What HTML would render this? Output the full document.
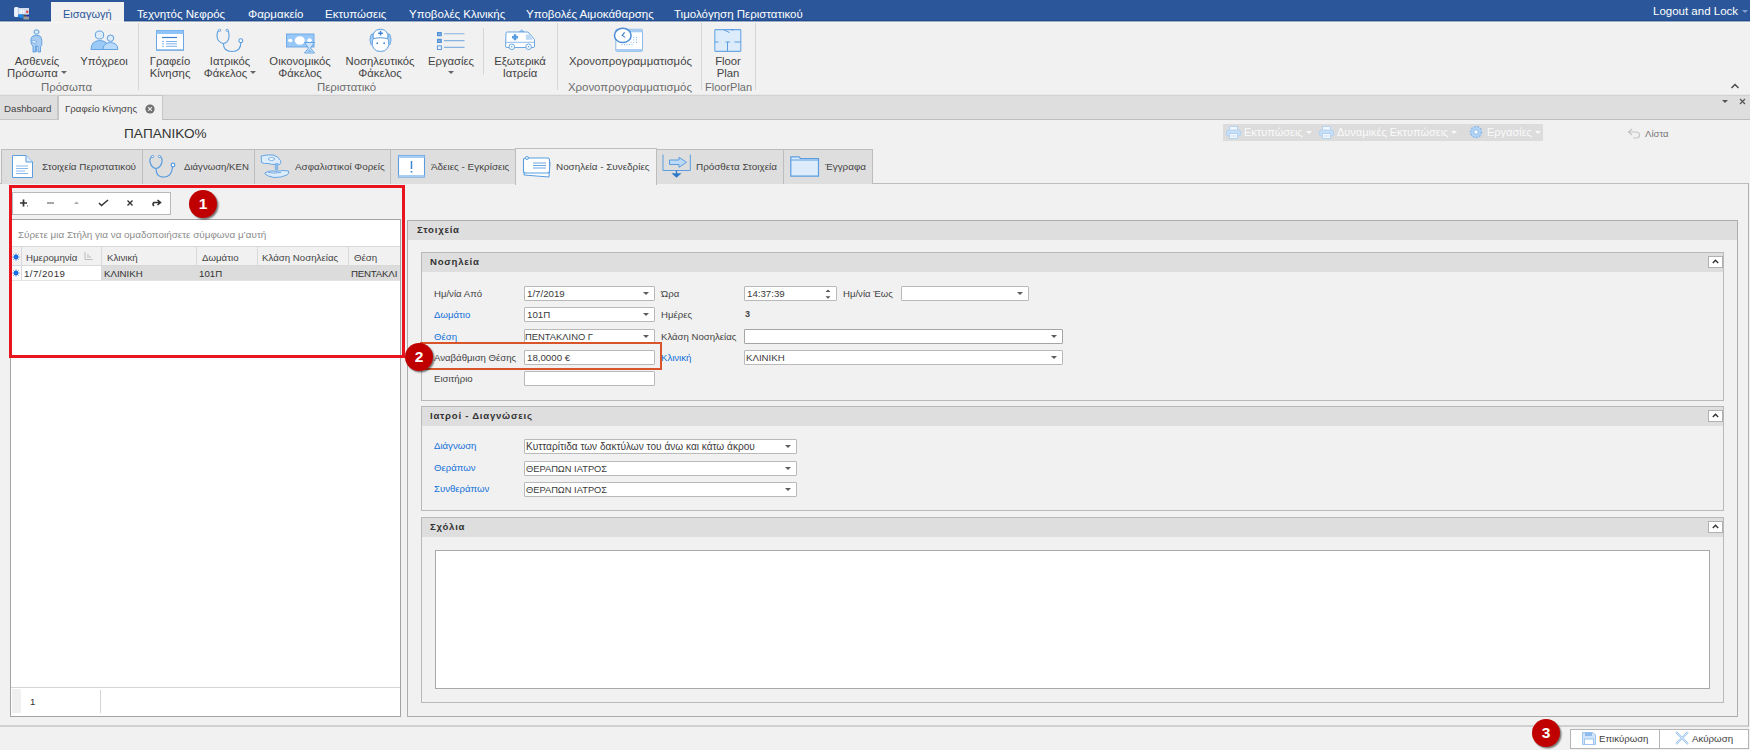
<!DOCTYPE html>
<html><head><meta charset="utf-8">
<style>
*{box-sizing:border-box;margin:0;padding:0}
html,body{width:1750px;height:750px;overflow:hidden;background:#f1f1f1;font-family:"Liberation Sans",sans-serif;font-size:11px;color:#444}
.a{position:absolute}
.t{position:absolute;white-space:nowrap;line-height:13px}
svg{position:absolute;overflow:visible}
#top{left:0;top:0;width:1750px;height:21px;background:#2b579a}
.menu{color:#fff;font-size:11.5px}
.rsep{position:absolute;width:1px;background:#d6d6d6}
.rb{position:absolute;width:120px;text-align:center;color:#444;line-height:11.5px;white-space:nowrap;font-size:11.3px}
.glab{position:absolute;color:#6d6d6d;top:81px;white-space:nowrap;line-height:13px;font-size:11.4px}
.ptab{position:absolute;top:149px;height:35px;background:#dedede;border:1px solid #bdbdbd;border-bottom:none}
.pt{position:absolute;top:161px;font-size:9.9px;color:#444;white-space:nowrap;line-height:12px}
.fld{position:absolute;background:#fff;border:1px solid #b9b9b9;height:15px;border-radius:1px}
.fv{position:absolute;left:2px;top:1px;line-height:12px;color:#3a3a3a;white-space:nowrap;font-size:9.7px}
.dd{position:absolute;right:5.5px;top:5px;width:0;height:0;border-left:3px solid transparent;border-right:3px solid transparent;border-top:3px solid #5c5c5c}
.lbl{position:absolute;white-space:nowrap;line-height:12px;color:#444;font-size:9.6px}
.blue{color:#1170d8}
.gbox{position:absolute;border:1px solid #b9b9b9;background:#f1f1f1}
.gh{position:absolute;left:0;top:0;right:0;height:18.5px;background:#dedede}
.ght{position:absolute;top:3px;font-weight:bold;color:#333;font-size:9.6px;line-height:12px;white-space:nowrap;letter-spacing:0.75px}
.cbtn{position:absolute;width:14.5px;height:12px;background:#fff;border:1px solid #b0b0b0}
.tri{display:inline-block;width:0;height:0;border-left:3px solid transparent;border-right:3px solid transparent;border-top:3px solid #666;vertical-align:middle;margin-bottom:2px}
.tri.w{border-top-color:#fafafa;margin-left:0px}
.badge{position:absolute;width:28px;height:28px;border-radius:50%;background:#c00000;color:#fff;font-weight:bold;font-size:15.5px;text-align:center;line-height:28px;box-shadow:1.5px 1.5px 1.5px rgba(0,0,0,.5)}
</style></head>
<body>
<!-- ================= TOP BAR ================= -->
<div id="top" class="a"></div>
<div class="a" style="left:0;top:20px;width:1750px;height:1px;background:#214c90"></div>
<div class="a" style="left:0;top:21px;width:1750px;height:1px;background:#9aabc8"></div>
<div class="a" style="left:0;top:22px;width:1750px;height:1px;background:#f7f6f3"></div>
<svg style="left:13px;top:6px" width="17" height="14" viewBox="0 0 17 14">
 <rect x="1" y="1" width="4.8" height="10" rx="1.5" fill="#dfe6f5"/><rect x="2" y="1.5" width="2.5" height="9" fill="#eef2fa"/>
 <rect x="5.8" y="2" width="10.2" height="6.5" fill="#d2def0"/>
 <path d="M7 3 V8 M8.5 3 V8 M10.5 3.5 V8 M7 5.5 H12" stroke="#f4f6fb" stroke-width="0.9"/>
 <circle cx="14.2" cy="5.8" r="1.4" fill="#e5554f"/>
 <path d="M5 8.5 H10.5 V12.5 L7 11.5 L5 11Z" fill="#1a86e8"/>
 <rect x="10.5" y="9" width="5.5" height="4.5" fill="#9a9a9a"/><rect x="10.5" y="9" width="3" height="1.5" fill="#5a4a3a"/><rect x="13.5" y="9" width="2.5" height="1.5" fill="#1b2fb0"/>
</svg>
<div class="a" style="left:51px;top:2px;width:73px;height:20px;background:#f1f1f1"></div>
<div class="t" style="left:63px;top:8px;color:#2b579a;font-size:11px">Εισαγωγή</div>
<div class="t menu" style="left:137px;top:8px">Τεχνητός Νεφρός</div>
<div class="t menu" style="left:248px;top:8px">Φαρμακείο</div>
<div class="t menu" style="left:325px;top:8px">Εκτυπώσεις</div>
<div class="t menu" style="left:409px;top:8px">Υποβολές Κλινικής</div>
<div class="t menu" style="left:526px;top:8px">Υποβολές Αιμοκάθαρσης</div>
<div class="t menu" style="left:674px;top:8px">Τιμολόγηση Περιστατικού</div>
<div class="t menu" style="left:1653px;top:5px">Logout and Lock</div>
<div class="a" style="left:1742px;top:10px;width:0;height:0;border-left:3px solid transparent;border-right:3px solid transparent;border-top:3px solid #7f9fd0"></div>

<!-- ================= RIBBON ================= -->
<div class="rsep" style="left:138px;top:23px;height:67px"></div>
<div class="rsep" style="left:483px;top:28px;height:47px"></div>
<div class="rsep" style="left:557px;top:23px;height:67px"></div>
<div class="rsep" style="left:701px;top:23px;height:67px"></div>
<div class="rsep" style="left:755px;top:23px;height:67px"></div>

<div class="rb" style="left:-23px;top:56px">Ασθενείς<br>Πρόσωπα <i class="tri"></i></div>
<div class="rb" style="left:44px;top:56px">Υπόχρεοι</div>
<div class="rb" style="left:110px;top:56px">Γραφείο<br>Κίνησης</div>
<div class="rb" style="left:170px;top:56px">Ιατρικός<br>Φάκελος <i class="tri"></i></div>
<div class="rb" style="left:240px;top:56px">Οικονομικός<br>Φάκελος</div>
<div class="rb" style="left:320px;top:56px">Νοσηλευτικός<br>Φάκελος</div>
<div class="rb" style="left:391px;top:56px">Εργασίες<br><i class="tri"></i></div>
<div class="rb" style="left:460px;top:56px">Εξωτερικά<br>Ιατρεία</div>
<div class="rb" style="left:569px;top:56px">Χρονοπρογραμματισμός</div>
<div class="rb" style="left:668px;top:56px">Floor<br>Plan</div>

<div class="glab" style="left:41px">Πρόσωπα</div>
<div class="glab" style="left:317px">Περιστατικό</div>
<div class="glab" style="left:568px">Χρονοπρογραμματισμός</div>
<div class="glab" style="left:705px;font-size:11px">FloorPlan</div>
<svg style="left:1730px;top:83px" width="10" height="6" viewBox="0 0 10 6"><path d="M1.5 5 L5 1.5 L8.5 5" fill="none" stroke="#444" stroke-width="1.4"/></svg>

<!-- ribbon icons -->
<!-- patient -->
<svg style="left:29px;top:29px" width="16" height="24" viewBox="0 0 16 24">
 <ellipse cx="7.5" cy="3" rx="2.5" ry="2.2" fill="#dcecfb" stroke="#5a9de0" stroke-width="1"/>
 <path d="M4 7 Q7.5 5.5 11 7 Q12.8 8.5 12.8 11.5 V15.5 Q12.8 17 11.5 17.5 V23 H9 V17 H6.5 V23 H4 V17 Q2 16 2 13 V10 Q2 8 4 7Z" fill="#a9cdf2" stroke="#5a9de0" stroke-width="0.9"/>
 <path d="M7.5 17 V23" stroke="#5a9de0" stroke-width="0.8"/>
 <path d="M2.5 12 Q5 11 8 12.8 Q7 14.5 4.5 14 Q2.5 13.5 2.5 12Z" fill="#fff" stroke="#5a9de0" stroke-width="0.7"/>
</svg>
<!-- people -->
<svg style="left:90px;top:30px" width="28" height="21" viewBox="0 0 28 21">
 <ellipse cx="9.5" cy="5" rx="4.2" ry="4" fill="#dcecfb" stroke="#5a9de0" stroke-width="1"/>
 <path d="M1 19.5 Q1 11 9.5 10.5 Q15 10.5 17 13.5 L17 19.5Z" fill="#9ccaf6" stroke="#5a9de0" stroke-width="0.9"/>
 <ellipse cx="20.5" cy="8.2" rx="3.3" ry="3.2" fill="#dcecfb" stroke="#5a9de0" stroke-width="1"/>
 <path d="M13 19.5 Q13 12.8 20.5 12.5 Q27.8 12.8 27.8 19.5Z" fill="#b9dafa" stroke="#5a9de0" stroke-width="0.9"/>
</svg>
<!-- form -->
<svg style="left:156px;top:30px" width="28" height="21" viewBox="0 0 28 21">
 <rect x="0.5" y="0.5" width="27" height="20" fill="#fff" stroke="#6aa6e4" stroke-width="1"/>
 <rect x="0.5" y="0.5" width="27" height="3.5" fill="#90c4f8"/>
 <rect x="0.5" y="19" width="27" height="1.5" fill="#9cc3ea"/>
 <path d="M6 7.5 H21" stroke="#3f7fd0" stroke-width="1.2"/>
 <path d="M6 11.5 H8 M10 11.5 H21 M6 13.8 H8 M10 13.8 H21 M6 16.3 H8 M10 16.3 H21" stroke="#7fb2ea" stroke-width="1"/>
</svg>
<!-- stethoscope -->
<svg style="left:214px;top:28px" width="30" height="25" viewBox="0 0 30 25">
 <path d="M5.3 2.5 Q3 3 3 8 Q3.5 14.5 9.4 15.5 Q15 14.5 15 8 Q15 3 13.3 2.5" fill="none" stroke="#5a9de0" stroke-width="1.1"/>
 <path d="M9.4 15.5 Q9.4 23.5 18 23.5 Q26.8 23.5 26.8 14.7" fill="none" stroke="#5a9de0" stroke-width="1.1"/>
 <circle cx="26.8" cy="12.7" r="1.9" fill="#fff" stroke="#5a9de0" stroke-width="1.1"/>
 <ellipse cx="5.6" cy="2.3" rx="1.3" ry="1" fill="#fff" stroke="#5a9de0" stroke-width="0.9"/>
 <ellipse cx="13.2" cy="2.3" rx="1.3" ry="1" fill="#fff" stroke="#5a9de0" stroke-width="0.9"/>
</svg>
<!-- money -->
<svg style="left:286px;top:33px" width="29" height="21" viewBox="0 0 29 21">
 <rect x="0.5" y="1" width="27.5" height="13" fill="#98c8f8" stroke="#6aa6e4" stroke-width="0.9"/>
 <ellipse cx="4.2" cy="7.5" rx="2.2" ry="1.7" fill="#fff"/>
 <ellipse cx="13.8" cy="7.5" rx="5" ry="4.2" fill="#fff"/>
 <ellipse cx="23.5" cy="7.3" rx="2.3" ry="2" fill="#fff"/>
 <path d="M18.5 9.5 H28.5 L24.5 15 L28.5 20 H18.5 L22.5 15Z" fill="#cfe4fa" stroke="#5a9de0" stroke-width="0.9"/>
 <path d="M20.5 19 H26.5 L23.5 16Z" fill="#8fbff0"/>
</svg>
<!-- nurse -->
<svg style="left:369px;top:28px" width="23" height="25" viewBox="0 0 23 25">
 <path d="M2.8 11 Q2 23.5 11.5 23.5 Q21 23.5 20.2 11" fill="#fff" stroke="#5a9de0" stroke-width="1"/>
 <path d="M2.2 17 Q0 12 1.5 8 Q2.5 5 4 6 L4.5 10.5 Q3 12.5 3.3 16Z" fill="#a9cdf2" stroke="#5a9de0" stroke-width="0.8"/>
 <path d="M20.8 17 Q23 12 21.5 8 Q20.5 5 19 6 L18.5 10.5 Q20 12.5 19.7 16Z" fill="#a9cdf2" stroke="#5a9de0" stroke-width="0.8"/>
 <path d="M4.2 10.5 Q3 1.8 11.5 1.2 Q20 1.8 18.8 10.5 Q11.5 8.8 4.2 10.5Z" fill="#fff" stroke="#5a9de0" stroke-width="1"/>
 <path d="M11.5 2.8 V7.6 M9.1 5.2 H13.9" stroke="#3f86d6" stroke-width="1.5"/>
 <circle cx="8.3" cy="15.2" r="0.9" fill="#3f86d6"/><circle cx="15.2" cy="15.2" r="0.9" fill="#3f86d6"/>
</svg>
<!-- tasks -->
<svg style="left:436px;top:31px" width="30" height="20" viewBox="0 0 30 20">
 <rect x="1" y="1" width="4.8" height="4.2" fill="#4a8fd8"/><path d="M2 2 L4.8 4.2 M4.8 2 L2 4.2" stroke="#a9cdf2" stroke-width="0.6"/>
 <rect x="1" y="7.8" width="4.8" height="4.2" fill="#4a8fd8"/><path d="M2 8.8 L4.8 11 M4.8 8.8 L2 11" stroke="#a9cdf2" stroke-width="0.6"/>
 <rect x="1.4" y="14.9" width="4" height="3.6" fill="#eef5fd" stroke="#4a8fd8" stroke-width="0.9"/>
 <path d="M8 2.8 H28.5 M8 9.6 H28.5 M8 16.4 H28.5" stroke="#86b2e0" stroke-width="1.1"/>
</svg>
<!-- ambulance -->
<svg style="left:505px;top:29px" width="31" height="22" viewBox="0 0 31 22">
 <path d="M14.5 3 L16.7 0.8 L19 3Z" fill="#cfe4fa" stroke="#5a9de0" stroke-width="0.8"/>
 <path d="M1 4 Q1 3 2.5 3 H22 Q23 3 24 4 L29.5 10.5 V17 Q29.5 18.5 28 18.5 H2 Q0.6 18.5 0.6 17Z" fill="#fff" stroke="#5a9de0" stroke-width="0.9"/>
 <path d="M20.8 5.6 H24.5 L28 10.8 H20.8Z" fill="#bcd9f6"/>
 <path d="M0.7 13.3 H29.5" stroke="#7fb2ea" stroke-width="0.9"/>
 <path d="M10 5.3 V11.3 M7 8.3 H13" stroke="#5a9de0" stroke-width="2.6"/>
 <circle cx="6.8" cy="17.8" r="2.8" fill="#fff" stroke="#5a9de0" stroke-width="0.9"/><circle cx="6.8" cy="17.8" r="0.8" fill="#5a9de0"/>
 <circle cx="23.6" cy="17.8" r="2.8" fill="#fff" stroke="#5a9de0" stroke-width="0.9"/><circle cx="23.6" cy="17.8" r="0.8" fill="#5a9de0"/>
</svg>
<!-- schedule -->
<svg style="left:613px;top:27px" width="31" height="26" viewBox="0 0 31 26">
 <rect x="2.8" y="2.3" width="26.7" height="22" rx="1" fill="#fff" stroke="#7fb2ea" stroke-width="0.9"/>
 <rect x="2.8" y="2.3" width="26.7" height="3" fill="#a9cdf2"/><rect x="2.8" y="22" width="26.7" height="2.3" fill="#a9cdf2"/>
 <path d="M20.2 10.4 h1 M23 10.4 h1 M20.2 12.9 h1 M23 12.9 h1 M17.5 15.4 h1 M20.2 15.4 h1 M23 15.4 h1 M8.2 17.7 h1 M11 17.7 h1 M13.5 17.7 h1 M16 17.7 h1 M18.5 17.7 h1" stroke="#7fb2ea" stroke-width="1"/>
 <ellipse cx="9.8" cy="8.4" rx="8.3" ry="7.2" fill="#fff" stroke="#4a8fd8" stroke-width="1.5"/>
 <path d="M11.6 5.3 L9.2 8.4 L12.2 10.4" fill="none" stroke="#3f7cc8" stroke-width="1.1"/>
</svg>
<!-- floor plan -->
<svg style="left:714px;top:29px" width="28" height="23" viewBox="0 0 28 23">
 <rect x="0.8" y="0.6" width="26" height="21.8" rx="0.8" fill="#dcecfb" stroke="#6aa6e4" stroke-width="1.1"/>
 <path d="M9.5 0.6 L15.5 3.6 M17 0.8 H20 M0.8 13 H4.5 M11.5 13 H16 M20.5 13 H26.8 M13.5 13 V22.4" fill="none" stroke="#5a9de0" stroke-width="1"/>
</svg>

<!-- ================= DOC TABS ================= -->
<div class="a" style="left:0;top:94px;width:1750px;height:1px;background:#e9e9e9"></div>
<div class="a" style="left:0;top:95px;width:1750px;height:25px;background:#dedede;border-top:1px solid #d2d2d2;border-bottom:1px solid #bdbdbd"></div>
<div class="a" style="left:0;top:96px;width:58px;height:24px;background:#dedede;border-right:1px solid #c6c6c6;border-bottom:1px solid #c6c6c6"></div>
<div class="t" style="left:4px;top:102px;font-size:9.7px;color:#444">Dashboard</div>
<div class="a" style="left:58px;top:95px;width:105px;height:25px;background:#f1f1f1;border:1px solid #c6c6c6;border-bottom:none"></div>
<div class="t" style="left:65px;top:101.5px;font-size:9.7px;color:#444">Γραφείο Κίνησης</div>
<svg style="left:145px;top:103.5px" width="10" height="10" viewBox="0 0 10 10"><circle cx="5" cy="5" r="4.6" fill="#707070"/><path d="M3.1 3.1 L6.9 6.9 M6.9 3.1 L3.1 6.9" stroke="#e6e6e6" stroke-width="1.3"/></svg>
<div class="a" style="left:1721.5px;top:100px;width:0;height:0;border-left:3px solid transparent;border-right:3px solid transparent;border-top:3.5px solid #555"></div>
<svg style="left:1739px;top:98px" width="7" height="7" viewBox="0 0 7 7"><path d="M1 1 L6 6 M6 1 L1 6" stroke="#555" stroke-width="1.2"/></svg>

<!-- ================= CONTENT HEADER ================= -->
<div class="t" style="left:124px;top:126px;font-size:13.6px;color:#333;line-height:15px">ΠΑΠΑΝΙΚΟ%</div>

<div class="a" style="left:1223px;top:124px;width:320px;height:17px;background:#dcdcdc"></div>
<svg style="left:1226px;top:126px" width="15" height="13" viewBox="0 0 15 13">
 <rect x="3.5" y="0.5" width="8" height="4" fill="#f4f8fd" stroke="#b5d3f2"/><rect x="0.5" y="4" width="14" height="6" rx="2" fill="#c6def6" stroke="#b5d3f2"/><rect x="3.5" y="7.5" width="8" height="5" fill="#f4f8fd" stroke="#b5d3f2"/><path d="M5 10 H10" stroke="#c6def6"/>
</svg>
<div class="t" style="left:1244px;top:126px;color:#fafafa;font-size:11px">Εκτυπώσεις <i class="tri w"></i></div>
<svg style="left:1319px;top:126px" width="15" height="13" viewBox="0 0 15 13">
 <rect x="3.5" y="0.5" width="8" height="4" fill="#f4f8fd" stroke="#b5d3f2"/><rect x="0.5" y="4" width="14" height="6" rx="2" fill="#c6def6" stroke="#b5d3f2"/><rect x="3.5" y="7.5" width="8" height="5" fill="#f4f8fd" stroke="#b5d3f2"/><path d="M5 10 H10" stroke="#c6def6"/>
</svg>
<div class="t" style="left:1337px;top:126px;color:#fafafa;font-size:11px">Δυναμικές Εκτυπώσεις <i class="tri w"></i></div>
<svg style="left:1469px;top:125px" width="14" height="14" viewBox="0 0 14 14">
 <circle cx="7" cy="7" r="5.5" fill="#b3d4f5" stroke="#8dbbec" stroke-width="1.5" stroke-dasharray="2 1.3"/><circle cx="7" cy="7" r="2.2" fill="#fff" stroke="#8dbbec"/>
</svg>
<div class="t" style="left:1487px;top:126px;color:#fafafa;font-size:11px">Εργασίες <i class="tri w"></i></div>

<svg style="left:1627px;top:128px" width="14" height="11" viewBox="0 0 14 11"><path d="M5 1 L1.5 4 L5 7 M1.5 4 H9 Q12.5 4 12.5 7 Q12.5 10 9 10 H6" fill="none" stroke="#c4c4c4" stroke-width="1.2"/></svg>
<div class="t" style="left:1645px;top:127px;color:#777;font-size:9.6px">Λίστα</div>

<!-- ================= PAGE TABS ================= -->
<div class="a" style="left:0;top:183px;width:1749px;height:544px;border-right:1px solid #b0b0b0;border-top:1px solid #bdbdbd;border-bottom:2px solid #d0d0d0"></div>
<div class="ptab" style="left:1px;width:142px"></div>
<div class="ptab" style="left:142px;width:113px"></div>
<div class="ptab" style="left:254px;width:137px"></div>
<div class="ptab" style="left:390px;width:126px"></div>
<div class="ptab" style="left:656px;width:128px"></div>
<div class="ptab" style="left:783px;width:90px"></div>
<div class="a" style="left:515px;top:148px;width:142px;height:37px;background:#f1f1f1;border:1px solid #bdbdbd;border-bottom:none"></div>

<div class="pt" style="left:42px">Στοιχεία Περιστατικού</div>
<div class="pt" style="left:184px;font-size:9.6px">Διάγνωση/ΚΕΝ</div>
<div class="pt" style="left:295px">Ασφαλιστικοί Φορείς</div>
<div class="pt" style="left:431px">Άδειες - Εγκρίσεις</div>
<div class="pt" style="left:556px">Νοσηλεία - Συνεδρίες</div>
<div class="pt" style="left:696px">Πρόσθετα Στοιχεία</div>
<div class="pt" style="left:825px">Έγγραφα</div>

<!-- tab icons -->
<svg style="left:12px;top:155px" width="21" height="23" viewBox="0 0 21 23">
 <path d="M0.5 0.5 H14 L20.5 7 V22.5 H0.5Z" fill="#fff" stroke="#5a9de0" stroke-width="1"/>
 <path d="M14 0.5 V7 H20.5" fill="#dcecfb" stroke="#5a9de0" stroke-width="1"/>
 <path d="M4 11 H16 M4 13.5 H16 M4 16 H13 M4 18.5 H16" stroke="#8dbbec" stroke-width="1"/>
</svg>
<svg style="left:149px;top:155px" width="29" height="23" viewBox="0 0 29 23">
 <path d="M3.5 1.5 Q0.5 2 1 7 Q2.5 13 7 13.5 Q11.5 13 13 7 Q13.5 2 10.5 1.5" fill="none" stroke="#5a9de0" stroke-width="1.2"/>
 <path d="M7 13.5 Q7 22.5 15 22 Q23 21.5 23.5 12" fill="none" stroke="#5a9de0" stroke-width="1.2"/>
 <circle cx="24" cy="10" r="1.8" fill="#fff" stroke="#5a9de0" stroke-width="1.2"/>
 <circle cx="3.6" cy="1.5" r="1.1" fill="#fff" stroke="#5a9de0"/><circle cx="10.4" cy="1.5" r="1.1" fill="#fff" stroke="#5a9de0"/>
</svg>
<svg style="left:260px;top:154px" width="30" height="25" viewBox="0 0 30 25">
 <path d="M1.2 2 Q7 0.5 13 1 Q18 2 20.5 6.5 Q21.5 9 19.5 10.5 Q17.5 9.5 15.5 10.5 Q11 10.5 8 9.5 Q4 10 1.5 8.5 Z" fill="#dcecfb" stroke="#5a9de0" stroke-width="0.9"/>
 <ellipse cx="11.5" cy="5" rx="3.2" ry="1.4" fill="#fff" stroke="#5a9de0" stroke-width="0.8"/>
 <rect x="15.3" y="9.5" width="2.4" height="6.5" rx="1" fill="#8fbff0" stroke="#5a9de0" stroke-width="0.6"/>
 <path d="M5 19 Q8 16.5 13 17 Q16 17.5 19 17 Q24 16 28.5 17 Q29.5 19.5 27 21 Q21 23.8 14 23.5 Q8 22.5 5 20Z" fill="#dcecfb" stroke="#5a9de0" stroke-width="0.9"/>
 <path d="M8 18.5 Q13 19.5 21 18.5" fill="none" stroke="#5a9de0" stroke-width="0.8"/>
</svg>
<svg style="left:398px;top:155px" width="28" height="23" viewBox="0 0 28 23">
 <rect x="0.5" y="0.5" width="26" height="21.5" fill="#fff" stroke="#5a9de0" stroke-width="1.1"/>
 <rect x="0.5" y="0.5" width="26" height="2.5" fill="#a9cdf2"/><rect x="0.5" y="20" width="26" height="2" fill="#a9cdf2"/>
 <path d="M13.5 6 V14" stroke="#3f86d6" stroke-width="1.5"/><rect x="12.7" y="16" width="1.6" height="1.6" fill="#3f86d6"/>
</svg>
<svg style="left:523px;top:156px" width="30" height="22" viewBox="0 0 30 22">
 <path d="M2 4 L27 6 L26 21 L1 19Z" fill="#fff" stroke="#5a9de0" stroke-width="1"/>
 <rect x="0.5" y="2" width="26" height="15" rx="2" fill="#fff" stroke="#5a9de0" stroke-width="1.1"/>
 <circle cx="4" cy="2" r="1.5" fill="#fff" stroke="#5a9de0"/>
 <path d="M10 7 H23 M10 9.5 H23 M10 12 H23" stroke="#5a9de0" stroke-width="0.9"/>
</svg>
<svg style="left:662px;top:154px" width="30" height="24" viewBox="0 0 30 24">
 <path d="M1 0.5 V16.5 H28.3 V0.5" fill="none" stroke="#5a9de0" stroke-width="1"/>
 <path d="M7.5 6 H17 V3.3 L24.5 8.3 L17 13.3 V10.5 H7.5Z" fill="#bcd9f6" stroke="#5a9de0" stroke-width="1"/>
 <path d="M14.5 16.5 V20" stroke="#2f78c8" stroke-width="1.3"/><path d="M9.5 19.2 H19.5 L14.5 23.8Z" fill="#2f78c8"/>
</svg>
<svg style="left:790px;top:156px" width="30" height="21" viewBox="0 0 30 21">
 <path d="M0.8 0.8 H9 L10.5 2.5 H28.5 V20.2 H0.8Z" fill="#dcecfb" stroke="#5a9de0" stroke-width="1.2"/>
 <path d="M0.8 4 H28.5" stroke="#5a9de0" stroke-width="1"/>
</svg>

<!-- ================= LEFT PANEL (GRID) ================= -->
<div class="a" style="left:12px;top:192px;width:159px;height:23px;background:#fff;border:1px solid #b9b9b9"></div>
<svg style="left:20px;top:199px" width="142" height="10" viewBox="0 0 142 10">
 <path d="M0 4 H7 M3.5 0.5 V7.5" stroke="#333" stroke-width="1.7"/><rect x="7" y="6.5" width="1" height="1" fill="#666"/>
 <path d="M27 4 H34" stroke="#888" stroke-width="1.5"/>
 <path d="M54 5 L56.5 2.5 L59 5Z" fill="#aaa"/>
 <path d="M79 4 L81.5 6.5 L88 1" fill="none" stroke="#333" stroke-width="1.5"/>
 <path d="M107.5 1.5 L112.5 6.5 M112.5 1.5 L107.5 6.5" stroke="#333" stroke-width="1.4"/>
 <path d="M134 7 Q132 5 134 3.5 H140 M137.5 1 L140.5 3.5 L137.5 6" fill="none" stroke="#333" stroke-width="1.6"/>
</svg>

<div class="a" style="left:10px;top:219px;width:391px;height:498px;background:#fff;border:1px solid #a3a3a3"></div>
<div class="t" style="left:18px;top:228px;font-size:9.9px;color:#8b8b8b">Σύρετε μια Στήλη για να ομαδοποιήσετε σύμφωνα μ’αυτή</div>
<!-- header row -->
<div class="a" style="left:11px;top:246px;width:389px;height:20px;background:#f1f1f1;border-top:1px solid #d9d9d9;border-bottom:1px solid #d9d9d9"></div>
<div class="a" style="left:21px;top:247px;width:1px;height:34px;background:#d9d9d9"></div>
<div class="a" style="left:101px;top:247px;width:1px;height:34px;background:#d9d9d9"></div>
<div class="a" style="left:196px;top:247px;width:1px;height:34px;background:#d9d9d9"></div>
<div class="a" style="left:257px;top:247px;width:1px;height:34px;background:#d9d9d9"></div>
<div class="a" style="left:348px;top:247px;width:1px;height:34px;background:#d9d9d9"></div>
<div class="t" style="left:26px;top:251px;font-size:9.7px;color:#444">Ημερομηνία</div>
<svg style="left:84px;top:252px" width="9" height="8" viewBox="0 0 9 8"><path d="M1 0 V7.5 H8.5 M3 3 H5 M3 5 H7" fill="none" stroke="#bbb" stroke-width="1"/></svg>
<div class="t" style="left:107px;top:251px;font-size:9.7px;color:#444">Κλινική</div>
<div class="t" style="left:202px;top:251px;font-size:9.7px;color:#444">Δωμάτιο</div>
<div class="t" style="left:262px;top:251px;font-size:9.7px;color:#444">Κλάση Νοσηλείας</div>
<div class="t" style="left:354px;top:251px;font-size:9.7px;color:#444">Θέση</div>
<!-- data row -->
<div class="a" style="left:102px;top:266px;width:298px;height:14px;background:#dcdcdc"></div>
<div class="a" style="left:11px;top:280px;width:389px;height:1px;background:#e3e3e3"></div>
<div class="t" style="left:24px;top:268px;font-size:9.7px;color:#333;line-height:12px;letter-spacing:0.45px">1/7/2019</div>
<div class="t" style="left:104px;top:268px;font-size:9.7px;color:#333;line-height:12px">ΚΛΙΝΙΚΗ</div>
<div class="t" style="left:199px;top:268px;font-size:9.7px;color:#333;line-height:12px">101Π</div>
<div class="t" style="left:351px;top:268px;font-size:9.7px;color:#333;line-height:12px;letter-spacing:-0.2px">ΠΕΝΤΑΚΛΙ</div>
<svg style="left:12px;top:253px" width="8" height="24" viewBox="0 0 8 24">
 <g fill="#1a6fe0"><circle cx="4" cy="4" r="2.2"/><path d="M4 0.5 V7.5 M0.5 4 H7.5 M1.5 1.5 L6.5 6.5 M6.5 1.5 L1.5 6.5" stroke="#1a6fe0" stroke-width="0.9"/>
 <circle cx="4" cy="20" r="2.2"/><path d="M4 16.5 V23.5 M0.5 20 H7.5 M1.5 17.5 L6.5 22.5 M6.5 17.5 L1.5 22.5" stroke="#1a6fe0" stroke-width="0.9"/></g>
</svg>
<!-- footer -->
<div class="a" style="left:11px;top:687px;width:389px;height:1px;background:#d4d4d4"></div>
<div class="a" style="left:12px;top:689px;width:9px;height:24px;background:#f0f0f0"></div>
<div class="a" style="left:100px;top:690px;width:1px;height:23px;background:#d4d4d4"></div>
<div class="t" style="left:30px;top:695px;font-size:9.5px;color:#333">1</div>

<!-- red highlight box 1 -->
<div class="a" style="left:9px;top:185px;width:396px;height:173px;border:3px solid #e8151f"></div>
<div class="badge" style="left:189px;top:190px">1</div>

<!-- ================= RIGHT PANEL ================= -->
<div class="gbox" style="left:407px;top:220px;width:1331px;height:497px;border-color:#adadad">
 <div class="gh"></div><div class="ght" style="left:9px">Στοιχεία</div>
</div>
<!-- Νοσηλεία -->
<div class="gbox" style="left:421px;top:252px;width:1303px;height:149px">
 <div class="gh"></div><div class="ght" style="left:8px">Νοσηλεία</div>
 <div class="cbtn" style="left:1286px;top:3px"><svg style="left:2.5px;top:2px" width="7" height="5" viewBox="0 0 7 5"><path d="M0.8 4 L3.5 1.3 L6.2 4" fill="none" stroke="#333" stroke-width="1.4"/></svg></div>
</div>
<div class="lbl" style="left:434px;top:288px">Ημ/νία Από</div>
<div class="lbl blue" style="left:434px;top:309px">Δωμάτιο</div>
<div class="lbl blue" style="left:434px;top:331px">Θέση</div>
<div class="lbl" style="left:434px;top:352px">Αναβάθμιση Θέσης</div>
<div class="lbl" style="left:434px;top:373px">Εισιτήριο</div>
<div class="fld" style="left:524px;top:286px;width:131px"><div class="fv">1/7/2019</div><div class="dd"></div></div>
<div class="fld" style="left:524px;top:307px;width:131px"><div class="fv">101Π</div><div class="dd"></div></div>
<div class="fld" style="left:524px;top:329px;width:131px"><div class="fv" style="left:0;font-size:9.4px">ΠΕΝΤΑΚΛΙΝΟ Γ</div><div class="dd"></div></div>
<div class="fld" style="left:524px;top:350px;width:131px"><div class="fv">18,0000 €</div></div>
<div class="fld" style="left:524px;top:371px;width:131px"></div>

<div class="lbl" style="left:661px;top:288px">Ώρα</div>
<div class="lbl" style="left:661px;top:309px">Ημέρες</div>
<div class="lbl" style="left:661px;top:331px">Κλάση Νοσηλείας</div>
<div class="lbl blue" style="left:661px;top:352px">Κλινική</div>
<div class="fld" style="left:744px;top:286px;width:93px"><div class="fv">14:37:39</div>
 <svg style="left:80px;top:1.5px" width="6" height="11" viewBox="0 0 6 11"><path d="M0.5 3 L3 0.5 L5.5 3Z M0.5 7.2 L3 9.7 L5.5 7.2Z" fill="#555"/></svg></div>
<div class="t" style="left:745px;top:308px;font-weight:bold;font-size:9px;color:#444;line-height:12px">3</div>
<div class="fld" style="left:744px;top:329px;width:319px;border-color:#a5a5a5"><div class="dd"></div></div>
<div class="fld" style="left:744px;top:350px;width:319px"><div class="fv" style="left:1px">ΚΛΙΝΙΚΗ</div><div class="dd"></div></div>
<div class="lbl" style="left:843px;top:288px">Ημ/νία Έως</div>
<div class="fld" style="left:901px;top:286px;width:128px"><div class="dd"></div></div>

<!-- orange highlight box 2 -->
<div class="a" style="left:420px;top:342px;width:242px;height:28px;border:2px solid #d9532b"></div>
<div class="badge" style="left:405px;top:343px">2</div>

<!-- Ιατροί -->
<div class="gbox" style="left:421px;top:406px;width:1303px;height:105px">
 <div class="gh"></div><div class="ght" style="left:8px">Ιατροί - Διαγνώσεις</div>
 <div class="cbtn" style="left:1286px;top:3px"><svg style="left:2.5px;top:2px" width="7" height="5" viewBox="0 0 7 5"><path d="M0.8 4 L3.5 1.3 L6.2 4" fill="none" stroke="#333" stroke-width="1.4"/></svg></div>
</div>
<div class="lbl blue" style="left:434px;top:440px">Διάγνωση</div>
<div class="lbl blue" style="left:434px;top:462px">Θεράπων</div>
<div class="lbl blue" style="left:434px;top:483px">Συνθεράπων</div>
<div class="fld" style="left:524px;top:439px;width:273px"><div class="fv" style="left:1px;font-size:10.1px">Κυτταρίτιδα των δακτύλων του άνω και κάτω άκρου</div><div class="dd"></div></div>
<div class="fld" style="left:524px;top:461px;width:273px"><div class="fv" style="left:1px;font-size:9.3px">ΘΕΡΑΠΩΝ ΙΑΤΡΟΣ</div><div class="dd"></div></div>
<div class="fld" style="left:524px;top:482px;width:273px"><div class="fv" style="left:1px;font-size:9.3px">ΘΕΡΑΠΩΝ ΙΑΤΡΟΣ</div><div class="dd"></div></div>

<!-- Σχόλια -->
<div class="gbox" style="left:421px;top:517px;width:1303px;height:186px">
 <div class="gh"></div><div class="ght" style="left:8px">Σχόλια</div>
 <div class="cbtn" style="left:1286px;top:3px"><svg style="left:2.5px;top:2px" width="7" height="5" viewBox="0 0 7 5"><path d="M0.8 4 L3.5 1.3 L6.2 4" fill="none" stroke="#333" stroke-width="1.4"/></svg></div>
</div>
<div class="a" style="left:435px;top:550px;width:1275px;height:139px;background:#fff;border:1px solid #a9a9a9"></div>

<!-- ================= BOTTOM BAR ================= -->
<div class="a" style="left:1570px;top:729px;width:179px;height:20px;background:#fff;border:1px solid #b5b5b5"></div>
<div class="a" style="left:1659px;top:729px;width:1px;height:20px;background:#b5b5b5"></div>
<svg style="left:1582px;top:732px" width="14" height="13" viewBox="0 0 14 13">
 <path d="M0.5 0.5 H11 L13.5 3 V12.5 H0.5Z" fill="#cfe4fa" stroke="#9ec6ef"/><rect x="3" y="0.5" width="7" height="3.5" fill="#8dbbec"/><rect x="2.5" y="7" width="9" height="5.5" fill="#fff" stroke="#9ec6ef"/>
</svg>
<div class="t" style="left:1599px;top:732px;font-size:9.6px;color:#3c3c3c">Επικύρωση</div>
<svg style="left:1675px;top:731px" width="14" height="14" viewBox="0 0 14 14"><path d="M1 1 L13 13 M13 1 L1 13" stroke="#9ec6ef" stroke-width="2"/><path d="M1 1 L13 13 M13 1 L1 13" stroke="#e4f0fc" stroke-width="0.7"/></svg>
<div class="t" style="left:1692px;top:732px;font-size:9.7px;color:#3c3c3c">Ακύρωση</div>
<div class="badge" style="left:1532px;top:719px">3</div>

</body></html>
